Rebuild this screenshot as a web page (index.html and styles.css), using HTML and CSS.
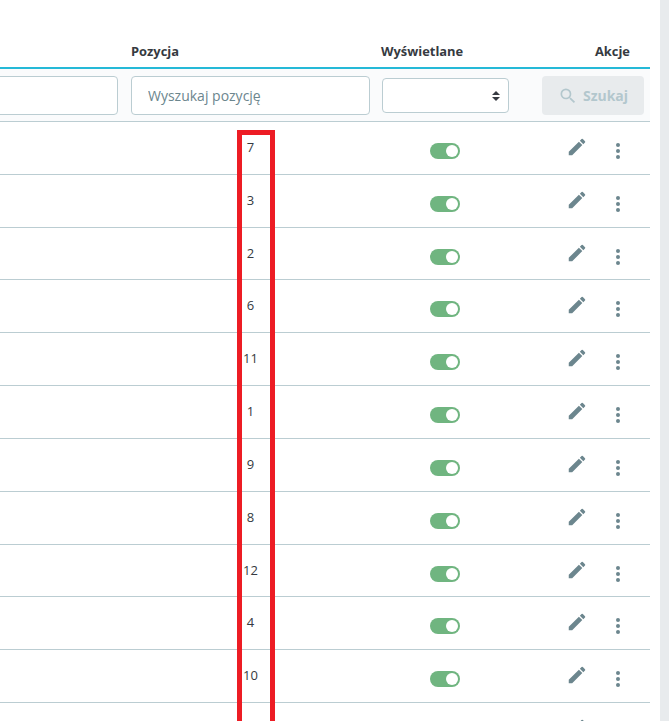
FILE: index.html
```html
<!DOCTYPE html>
<html lang="pl">
<head>
<meta charset="utf-8">
<title>Pozycja</title>
<link rel="stylesheet" href="styles.css">
</head>
<body>
<div class="page">
  <main class="panel">
    <div class="grid head">
      <div></div>
      <div class="cell-pos">Pozycja</div>
      <div class="cell-show">Wyświetlane</div>
      <div class="cell-act">Akcje</div>
    </div>
    <div class="grid filters">
      <div class="f-first"><input class="field field-cut" type="text"></div>
      <div class="f-pos"><input class="field" type="text" placeholder="Wyszukaj pozycję"></div>
      <div class="f-show"><div class="select"><svg class="sel-arrows" width="8" height="10" viewBox="0 0 8 10"><path d="M4 0 8 4H0zM4 10 0 6h8z"/></svg></div></div>
      <div class="f-act"><button class="btn" type="button"><svg width="20" height="20" viewBox="0 0 24 24"><path d="M15.5 14h-.79l-.28-.27A6.47 6.47 0 0 0 16 9.5 6.5 6.5 0 1 0 9.5 16c1.61 0 3.09-.59 4.23-1.57l.27.28v.79l5 4.99L20.49 19l-4.99-5zm-6 0C7.01 14 5 11.99 5 9.5S7.01 5 9.5 5 14 7.01 14 9.5 11.99 14 9.5 14z"/></svg>Szukaj</button></div>
    </div>
    <div class="grid row"><div></div><div class="num">7</div><div class="tog-cell"><span class="toggle"></span></div><div class="acts"><svg class="pen" width="24" height="24" viewBox="0 0 24 24"><path d="M3 17.25V21h3.75L17.81 9.94l-3.75-3.75L3 17.25zM20.71 7.04a1 1 0 0 0 0-1.41l-2.34-2.34a1 1 0 0 0-1.41 0l-1.83 1.83 3.75 3.75 1.83-1.83z"/></svg><svg class="dots" width="6" height="18" viewBox="0 0 6 18"><circle cx="3" cy="3" r="2"/><circle cx="3" cy="9" r="2"/><circle cx="3" cy="15" r="2"/></svg></div></div>
    <div class="grid row"><div></div><div class="num">3</div><div class="tog-cell"><span class="toggle"></span></div><div class="acts"><svg class="pen" width="24" height="24" viewBox="0 0 24 24"><path d="M3 17.25V21h3.75L17.81 9.94l-3.75-3.75L3 17.25zM20.71 7.04a1 1 0 0 0 0-1.41l-2.34-2.34a1 1 0 0 0-1.41 0l-1.83 1.83 3.75 3.75 1.83-1.83z"/></svg><svg class="dots" width="6" height="18" viewBox="0 0 6 18"><circle cx="3" cy="3" r="2"/><circle cx="3" cy="9" r="2"/><circle cx="3" cy="15" r="2"/></svg></div></div>
    <div class="grid row"><div></div><div class="num">2</div><div class="tog-cell"><span class="toggle"></span></div><div class="acts"><svg class="pen" width="24" height="24" viewBox="0 0 24 24"><path d="M3 17.25V21h3.75L17.81 9.94l-3.75-3.75L3 17.25zM20.71 7.04a1 1 0 0 0 0-1.41l-2.34-2.34a1 1 0 0 0-1.41 0l-1.83 1.83 3.75 3.75 1.83-1.83z"/></svg><svg class="dots" width="6" height="18" viewBox="0 0 6 18"><circle cx="3" cy="3" r="2"/><circle cx="3" cy="9" r="2"/><circle cx="3" cy="15" r="2"/></svg></div></div>
    <div class="grid row"><div></div><div class="num">6</div><div class="tog-cell"><span class="toggle"></span></div><div class="acts"><svg class="pen" width="24" height="24" viewBox="0 0 24 24"><path d="M3 17.25V21h3.75L17.81 9.94l-3.75-3.75L3 17.25zM20.71 7.04a1 1 0 0 0 0-1.41l-2.34-2.34a1 1 0 0 0-1.41 0l-1.83 1.83 3.75 3.75 1.83-1.83z"/></svg><svg class="dots" width="6" height="18" viewBox="0 0 6 18"><circle cx="3" cy="3" r="2"/><circle cx="3" cy="9" r="2"/><circle cx="3" cy="15" r="2"/></svg></div></div>
    <div class="grid row"><div></div><div class="num">11</div><div class="tog-cell"><span class="toggle"></span></div><div class="acts"><svg class="pen" width="24" height="24" viewBox="0 0 24 24"><path d="M3 17.25V21h3.75L17.81 9.94l-3.75-3.75L3 17.25zM20.71 7.04a1 1 0 0 0 0-1.41l-2.34-2.34a1 1 0 0 0-1.41 0l-1.83 1.83 3.75 3.75 1.83-1.83z"/></svg><svg class="dots" width="6" height="18" viewBox="0 0 6 18"><circle cx="3" cy="3" r="2"/><circle cx="3" cy="9" r="2"/><circle cx="3" cy="15" r="2"/></svg></div></div>
    <div class="grid row"><div></div><div class="num">1</div><div class="tog-cell"><span class="toggle"></span></div><div class="acts"><svg class="pen" width="24" height="24" viewBox="0 0 24 24"><path d="M3 17.25V21h3.75L17.81 9.94l-3.75-3.75L3 17.25zM20.71 7.04a1 1 0 0 0 0-1.41l-2.34-2.34a1 1 0 0 0-1.41 0l-1.83 1.83 3.75 3.75 1.83-1.83z"/></svg><svg class="dots" width="6" height="18" viewBox="0 0 6 18"><circle cx="3" cy="3" r="2"/><circle cx="3" cy="9" r="2"/><circle cx="3" cy="15" r="2"/></svg></div></div>
    <div class="grid row"><div></div><div class="num">9</div><div class="tog-cell"><span class="toggle"></span></div><div class="acts"><svg class="pen" width="24" height="24" viewBox="0 0 24 24"><path d="M3 17.25V21h3.75L17.81 9.94l-3.75-3.75L3 17.25zM20.71 7.04a1 1 0 0 0 0-1.41l-2.34-2.34a1 1 0 0 0-1.41 0l-1.83 1.83 3.75 3.75 1.83-1.83z"/></svg><svg class="dots" width="6" height="18" viewBox="0 0 6 18"><circle cx="3" cy="3" r="2"/><circle cx="3" cy="9" r="2"/><circle cx="3" cy="15" r="2"/></svg></div></div>
    <div class="grid row"><div></div><div class="num">8</div><div class="tog-cell"><span class="toggle"></span></div><div class="acts"><svg class="pen" width="24" height="24" viewBox="0 0 24 24"><path d="M3 17.25V21h3.75L17.81 9.94l-3.75-3.75L3 17.25zM20.71 7.04a1 1 0 0 0 0-1.41l-2.34-2.34a1 1 0 0 0-1.41 0l-1.83 1.83 3.75 3.75 1.83-1.83z"/></svg><svg class="dots" width="6" height="18" viewBox="0 0 6 18"><circle cx="3" cy="3" r="2"/><circle cx="3" cy="9" r="2"/><circle cx="3" cy="15" r="2"/></svg></div></div>
    <div class="grid row"><div></div><div class="num">12</div><div class="tog-cell"><span class="toggle"></span></div><div class="acts"><svg class="pen" width="24" height="24" viewBox="0 0 24 24"><path d="M3 17.25V21h3.75L17.81 9.94l-3.75-3.75L3 17.25zM20.71 7.04a1 1 0 0 0 0-1.41l-2.34-2.34a1 1 0 0 0-1.41 0l-1.83 1.83 3.75 3.75 1.83-1.83z"/></svg><svg class="dots" width="6" height="18" viewBox="0 0 6 18"><circle cx="3" cy="3" r="2"/><circle cx="3" cy="9" r="2"/><circle cx="3" cy="15" r="2"/></svg></div></div>
    <div class="grid row"><div></div><div class="num">4</div><div class="tog-cell"><span class="toggle"></span></div><div class="acts"><svg class="pen" width="24" height="24" viewBox="0 0 24 24"><path d="M3 17.25V21h3.75L17.81 9.94l-3.75-3.75L3 17.25zM20.71 7.04a1 1 0 0 0 0-1.41l-2.34-2.34a1 1 0 0 0-1.41 0l-1.83 1.83 3.75 3.75 1.83-1.83z"/></svg><svg class="dots" width="6" height="18" viewBox="0 0 6 18"><circle cx="3" cy="3" r="2"/><circle cx="3" cy="9" r="2"/><circle cx="3" cy="15" r="2"/></svg></div></div>
    <div class="grid row"><div></div><div class="num">10</div><div class="tog-cell"><span class="toggle"></span></div><div class="acts"><svg class="pen" width="24" height="24" viewBox="0 0 24 24"><path d="M3 17.25V21h3.75L17.81 9.94l-3.75-3.75L3 17.25zM20.71 7.04a1 1 0 0 0 0-1.41l-2.34-2.34a1 1 0 0 0-1.41 0l-1.83 1.83 3.75 3.75 1.83-1.83z"/></svg><svg class="dots" width="6" height="18" viewBox="0 0 6 18"><circle cx="3" cy="3" r="2"/><circle cx="3" cy="9" r="2"/><circle cx="3" cy="15" r="2"/></svg></div></div>
    <div class="grid row"><div></div><div class="num"></div><div class="tog-cell"><span class="toggle"></span></div><div class="acts"><svg class="pen" width="24" height="24" viewBox="0 0 24 24"><path d="M3 17.25V21h3.75L17.81 9.94l-3.75-3.75L3 17.25zM20.71 7.04a1 1 0 0 0 0-1.41l-2.34-2.34a1 1 0 0 0-1.41 0l-1.83 1.83 3.75 3.75 1.83-1.83z"/></svg><svg class="dots" width="6" height="18" viewBox="0 0 6 18"><circle cx="3" cy="3" r="2"/><circle cx="3" cy="9" r="2"/><circle cx="3" cy="15" r="2"/></svg></div></div>
    <div class="highlight"></div>
  </main>
  <aside class="rail"></aside>
</div>
</body>
</html>
```

FILE: styles.css
```css
* { box-sizing: border-box; }
html, body { margin: 0; height: 100%; background: #fff; overflow: hidden; }
body { font-family: "Open Sans", sans-serif; font-size: 14px; color: #363a41; }

.page { display: flex; height: 721px; overflow: hidden; }
.panel { position: relative; width: 650px; flex: none; }
.rail { width: 9px; margin-left: 10px; flex: none; background: #e8ebed; }

.grid { display: grid; grid-template-columns: 125px 251px 139px 135px; }

.head { height: 69px; border-bottom: 2px solid #25b9d7; font-size: 12.9px; font-weight: 700; line-height: 17px; align-items: start; padding-top: 43px; color: #363a41; }
.cell-pos { padding-left: 6px; }
.cell-show { padding-left: 5px; }
.cell-act { text-align: right; padding-right: 20px; }

.filters { height: 53px; background: #fafbfc; border-bottom: 1px solid #bbcdd2; align-items: start; padding-top: 7px; }
.f-first { padding-right: 7px; overflow: hidden; }
.f-pos { padding: 0 6px; }
.f-show { padding: 2px 6px 0; }
.f-act { padding-left: 27px; padding-right: 6px; }

.field { display: block; width: 100%; height: 39px; padding: 0 16px; border: 1px solid #bbcdd2; border-radius: 4px; background: #fff; font: 14px "Open Sans", sans-serif; color: #363a41; outline: none; }
.field::placeholder { color: #6c868e; opacity: 1; }
.field-cut { margin-left: -20px; width: calc(100% + 20px); }

.select { display: flex; align-items: center; justify-content: flex-end; height: 35px; padding-right: 8px; border: 1px solid #bbcdd2; border-radius: 4px; background: #fff; }
.sel-arrows { fill: #363a41; }

.btn { display: flex; align-items: center; justify-content: center; gap: 5px; width: 102px; height: 39px; padding: 0; border: 0; border-radius: 4px; background: #e8ebed; color: #b3c7cd; font: 700 14px "Open Sans", sans-serif; }
.btn svg { fill: #b3c7cd; }

.row { height: 52.82px; border-bottom: 1px solid #bbcdd2; }
.num { text-align: center; padding: 16px 0 0 0; line-height: 19px; font-size: 13px; color: #363a41; }
.tog-cell { display: flex; justify-content: center; padding: 21px 2px 0 0; }
.toggle { position: relative; display: block; width: 30px; height: 16px; border-radius: 8px; background: #70b580; }
.toggle::after { content: ""; position: absolute; top: 2px; right: 2px; width: 12px; height: 12px; border-radius: 50%; background: #fff; }
.acts { display: flex; align-items: flex-start; padding: 14px 0 0 51px; }
.pen { width: 22px; height: 22px; fill: #6c868e; }
.dots { margin: 6px 0 0 27px; fill: #6c868e; }

.highlight { position: absolute; left: 237px; top: 130px; width: 38px; height: 640px; border: 5px solid #ed1c24; }
```
